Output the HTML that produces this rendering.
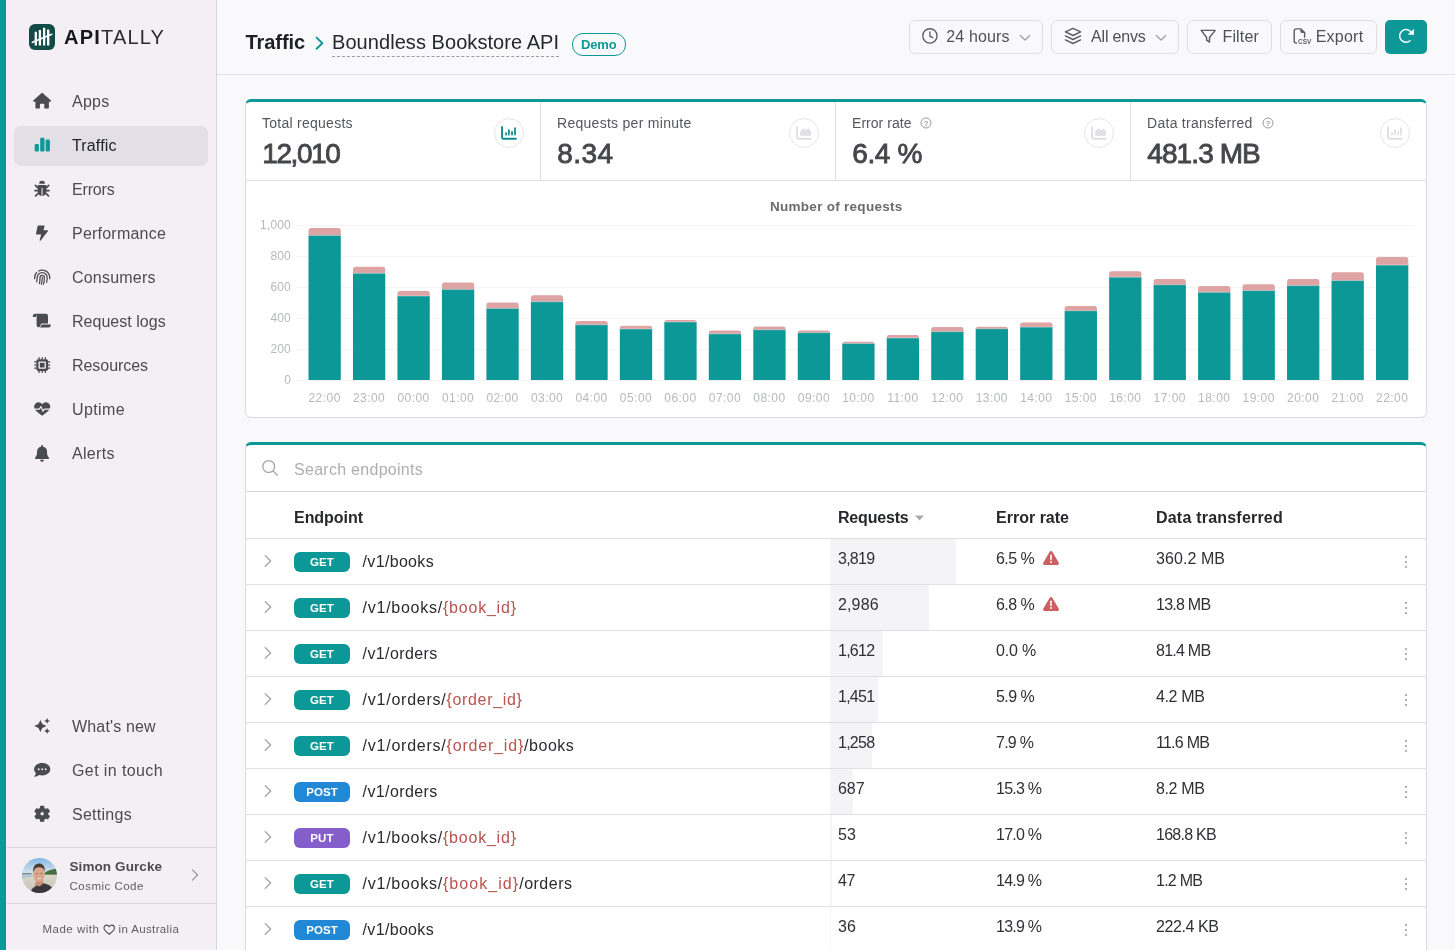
<!DOCTYPE html>
<html lang="en">
<head>
<meta charset="utf-8">
<title>Traffic - Boundless Bookstore API - Apitally</title>
<style>
*{box-sizing:border-box;margin:0;padding:0}
html,body{width:1455px;height:950px;overflow:hidden}
body{font-family:"Liberation Sans",sans-serif;background:#f9f9fb;color:#26272b;position:relative;will-change:transform}
.abs{position:absolute}
.t{position:absolute;white-space:nowrap}
#stripe{position:absolute;left:0;top:0;width:6px;height:950px;background:#0d9898}
#side{position:absolute;left:6px;top:0;width:211px;height:950px;background:#f3eff5;border-right:1px solid #d6d5da}
#logo{position:absolute;left:23px;top:24px;width:26px;height:26px;border-radius:6px;background:#124b48}
#brand{position:absolute;left:58px;top:25px;font-size:20px;line-height:24px;letter-spacing:1.2px;color:#16181b;white-space:nowrap}
#brand b{font-weight:700}
#brand span{font-weight:400;color:#2a2c30}
.nav{position:absolute;left:8px;width:194px;height:40px;border-radius:7px;color:#4b4c52;font-size:16px;line-height:40px;white-space:nowrap}
.nav.on{background:#e2e0e6;color:#222327}
.nav svg{position:absolute;left:16px;top:7px;width:24px;height:24px;fill:#4a4b50}
.nav.on svg{fill:#0d9898}
.nav span{position:absolute;left:58px;top:0}
#user{position:absolute;left:0;top:847px;width:210px;height:57px;border-top:1px solid #dcdade;border-bottom:1px solid #dcdade}
#made{position:absolute;left:0;top:920px;width:210px;text-align:center;font-size:11.5px;color:#5d5e64;line-height:16px;white-space:nowrap}

#head{position:absolute;left:217px;top:0;width:1238px;height:75px;border-bottom:1px solid #e1e1e6;background:#f9f9fb}
.btn{position:absolute;top:20px;height:34px;border:1px solid #dfdfe4;border-radius:6px;background:#f9f9fb;color:#4b4c52;font-size:15.5px;line-height:32px;white-space:nowrap}
.btn span{position:absolute;top:0}
.btn svg{position:absolute}

.card{position:absolute;left:245px;width:1182px;background:#fff;border:1px solid #d9dbde;border-top:3px solid #0d9898;border-radius:6px}
.stat{position:absolute;top:0;height:78px;border-right:1px solid #dfe0e3}
.stat .l{position:absolute;left:16px;top:13px;font-size:13.5px;line-height:16px;color:#55565c;white-space:nowrap}

.stat .ic{position:absolute;right:16.5px;top:16px;width:30px;height:30px;border:1px solid #e4e5e8;border-radius:50%;background:#fff}
.stat .ic svg{position:absolute;left:6px;top:6px;width:16px;height:16px}

.row{position:absolute;left:0;width:1180px;height:46px;border-top:1px solid #dfe0e3}
.row .chev{position:absolute;left:16px;top:15px;width:12px;height:14px}
.badge{position:absolute;left:48px;top:13px;width:56px;height:20px;border-radius:6px;color:#fff;font-size:11.5px;font-weight:700;line-height:20px;text-align:center;letter-spacing:.1px}
.get{background:#0d9898}.post{background:#2088d4}.put{background:#845eca}
.path{position:absolute;left:116.6px;top:12px;font-size:16px;line-height:22px;color:#2a2b2f;white-space:nowrap}
.path i{font-style:normal;color:#b8534f}
.path b{font-weight:400}
.rb{position:absolute;left:584px;top:0;height:45px;background:#f4f4f6}
.c1,.c2,.c3{position:absolute;top:9px;font-size:16px;line-height:22px;color:#2f3034;white-space:nowrap}
.c1{left:592px}.c2{left:750px}.c3{left:910px}
.dots{position:absolute;left:1158.5px;top:16.5px;width:4px;height:14px}
.dots i{display:block;width:2.8px;height:2.8px;border-radius:50%;background:#929398;margin:0 0 2.3px 0}
.warn{position:absolute;left:797.1px;top:12px;width:16px;height:14px}
</style>
</head>
<body>
<div id="stripe"></div>
<div id="side">
  <div id="logo"><svg width="26" height="26" viewBox="0 0 26 26"><g stroke="#fff" fill="none"><path d="M6.8 7.8V21.6M10.9 6V21.6M15.1 3.8V21.6M19.2 5.4V21.6" stroke-width="2.3"/><path d="M3.4 18.3L22.8 10.3" stroke-width="1.7" stroke-linecap="round"/></g></svg></div>
  <div id="brand"><b>API</b><span>TALLY</span></div>
  <div class="nav" style="top:82px"><svg viewBox="0 0 24 24"><path d="M11.3 4.2 a1.2 1.2 0 0 1 1.6 0 L20.7 11.2 a.9.9 0 0 1 -.6 1.6 H18.9 V18.4 a1.2 1.2 0 0 1 -1.2 1.2 H14.3 V15.4 a.7.7 0 0 0 -.7-.7 h-3 a.7.7 0 0 0 -.7.7 V19.6 H6.6 a1.2 1.2 0 0 1 -1.2-1.2 V12.8 H4.1 a.9.9 0 0 1 -.6-1.6 Z"/></svg><span style="letter-spacing:0.26px">Apps</span></div>
  <div class="nav on" style="top:126px"><svg viewBox="0 0 24 24"><rect x="4.7" y="11" width="4.2" height="7.5" rx="1.3"/><rect x="10.2" y="4.7" width="4.3" height="13.8" rx="1.3"/><rect x="15.6" y="6.6" width="4.3" height="11.9" rx="1.3"/></svg><span style="letter-spacing:0.15px">Traffic</span></div>
  <div class="nav" style="top:170px"><svg viewBox="0 0 24 24"><path d="M9.2 6.7 a2.85 2.85 0 0 1 5.7 0 Z"/><path d="M7.7 8 h8.7 v6.6 a4.35 4.35 0 0 1 -8.7 0 Z"/><path d="M12.05 11 V18.9" stroke="#f3eff5" stroke-width="1" fill="none"/><g fill="none" stroke="#4a4b50" stroke-width="1.7" stroke-linecap="round"><path d="M7.7 10.6 L5.4 8.3 M7.6 13.6 H5 M8.2 16.4 L5.6 18.9 M16.4 10.6 L18.7 8.3 M16.5 13.6 H19.1 M15.9 16.4 L18.5 18.9"/></g></svg><span style="letter-spacing:-0.16px">Errors</span></div>
  <div class="nav" style="top:214px"><svg viewBox="0 0 24 24"><path d="M8.3 4.4 H13.9 a.7.7 0 0 1 .67.9 L13.5 9.2 H17.4 a.7.7 0 0 1 .52 1.15 L10.7 19.6 a.6.6 0 0 1-1.05-.5 L11.2 13.4 H6.7 a.7.7 0 0 1-.67-.9 L7.65 4.9 a.7.7 0 0 1 .67-.5 Z"/></svg><span style="letter-spacing:0.22px">Performance</span></div>
  <div class="nav" style="top:258px"><svg viewBox="0 0 24 24"><g fill="none" stroke="#4a4b50" stroke-width="1.25" stroke-linecap="round"><path d="M4.7 13.6 a7.5 7.5 0 0 1 2-6.2"/><path d="M8.6 6 a7.5 7.5 0 0 1 11.1 6.5 v1.2"/><path d="M6.6 16.8 c.5-1.4.6-2.8.6-4.3 a5 5 0 0 1 10 0 c0 1.8-.15 3.4-.55 4.9"/><path d="M9.4 18.6 c.5-1.9.6-4 .6-6.1 a2.2 2.2 0 0 1 4.4 0 c0 2.4-.25 4.6-.85 6.6"/><path d="M12.2 12.4 c0 2.5-.2 4.7-.8 7"/></g></svg><span style="letter-spacing:0.21px">Consumers</span></div>
  <div class="nav" style="top:302px"><svg viewBox="0 0 24 24"><path d="M5.3 4.7 a2.5 2.5 0 0 0 -2.5 2.5 v.8 h3 v-.8 a.9.9 0 0 0 -.5 -2.5 Z"/><path d="M6.9 4.7 H15.7 a2.3 2.3 0 0 1 2.3 2.3 V14.5 H11.7 L10.5 15.7 V16.2 a1.95 1.95 0 0 1 -3.9 0 V7 a2.4 2.4 0 0 0 -.7 -2.3 Z"/><path d="M12 15.5 H20.8 v.7 a2.3 2.3 0 0 1 -2.3 2.3 H9.3 a2.7 2.7 0 0 0 2 -2.3 Z"/></svg><span style="letter-spacing:0.03px">Request logs</span></div>
  <div class="nav" style="top:346px"><svg viewBox="0 0 24 24"><rect x="6.3" y="6.2" width="11.8" height="11.7" rx="1.8"/><rect x="8.5" y="8.4" width="7.4" height="7.3" rx=".9" fill="#f3eff5"/><rect x="9.8" y="9.7" width="4.8" height="4.7" rx=".3"/><g><rect x="8.4" y="4.1" width="1.3" height="2.6" rx=".6"/><rect x="11.55" y="4.1" width="1.3" height="2.6" rx=".6"/><rect x="14.7" y="4.1" width="1.3" height="2.6" rx=".6"/><rect x="8.4" y="17.4" width="1.3" height="2.6" rx=".6"/><rect x="11.55" y="17.4" width="1.3" height="2.6" rx=".6"/><rect x="14.7" y="17.4" width="1.3" height="2.6" rx=".6"/><rect x="4.1" y="8.3" width="2.6" height="1.3" rx=".6"/><rect x="4.1" y="11.4" width="2.6" height="1.3" rx=".6"/><rect x="4.1" y="14.5" width="2.6" height="1.3" rx=".6"/><rect x="17.7" y="8.3" width="2.6" height="1.3" rx=".6"/><rect x="17.7" y="11.4" width="2.6" height="1.3" rx=".6"/><rect x="17.7" y="14.5" width="2.6" height="1.3" rx=".6"/></g></svg><span style="letter-spacing:-0.05px">Resources</span></div>
  <div class="nav" style="top:390px"><svg viewBox="0 0 24 24"><path d="M12.2 7.3 C11 5.3 8.4 4.7 6.4 5.8 C4.3 7 3.5 9.6 4.6 11.8 C5.6 13.8 9 16.7 12.2 18.8 C15.4 16.7 18.8 13.8 19.8 11.8 C20.9 9.6 20.1 7 18 5.8 C16 4.7 13.4 5.3 12.2 7.3 Z"/><path d="M3.6 12.1 H9.4 L10.9 9.5 L13 14.3 L14.4 12.1 H20.8" fill="none" stroke="#f3eff5" stroke-width="1.15" stroke-linejoin="round"/></svg><span style="letter-spacing:0.39px">Uptime</span></div>
  <div class="nav" style="top:434px"><svg viewBox="0 0 24 24"><path d="M12.05 4.1 a1 1 0 0 1 1 1 v.55 a5 5 0 0 1 4 4.9 v1.1 c0 1.9.6 3.5 1.7 4.7 l.2.25 a.8.8 0 0 1 -.6 1.3 H5.75 a.8.8 0 0 1 -.6-1.3 l.2-.25 C6.45 15.15 7.05 13.55 7.05 11.65 V10.55 a5 5 0 0 1 4-4.9 V5.1 a1 1 0 0 1 1-1 Z"/><path d="M10.05 18.7 h4 a2 2 0 0 1 -4 0 Z"/></svg><span style="letter-spacing:0.30px">Alerts</span></div>
  <div class="nav" style="top:707px"><svg viewBox="0 0 24 24"><path d="M10.40 5.90 L12.29 10.11 L16.50 12.00 L12.29 13.89 L10.40 18.10 L8.51 13.89 L4.30 12.00 L8.51 10.11Z"/><path d="M17.10 3.90 L18.00 6.00 L20.10 6.90 L18.00 7.80 L17.10 9.90 L16.20 7.80 L14.10 6.90 L16.20 6.00Z"/><path d="M17.10 14.00 L18.00 16.10 L20.10 17.00 L18.00 17.90 L17.10 20.00 L16.20 17.90 L14.10 17.00 L16.20 16.10Z"/></svg><span style="letter-spacing:0.16px">What's new</span></div>
  <div class="nav" style="top:751px"><svg viewBox="0 0 24 24"><path d="M12.2 5.1 c4.5 0 8.1 2.75 8.1 6.15 s-3.6 6.15 -8.1 6.15 c-1.1 0-2.2-.17-3.2-.48 c-1.2.9-2.7 1.7-4.4 1.8 a.35.35 0 0 1 -.3-.58 c.8-.95 1.4-2 1.65-3 C4.8 14.1 4.1 12.75 4.1 11.25 C4.1 7.85 7.7 5.1 12.2 5.1 Z"/><g fill="#f3eff5"><circle cx="8.7" cy="11.3" r=".95"/><circle cx="12.2" cy="11.3" r=".95"/><circle cx="15.7" cy="11.3" r=".95"/></g></svg><span style="letter-spacing:0.40px">Get in touch</span></div>
  <div class="nav" style="top:795px"><svg viewBox="0 0 24 24"><path fill-rule="evenodd" stroke="#4a4b50" stroke-width="1.2" stroke-linejoin="round" d="M10.39 6.48 L10.66 4.45 L13.64 4.45 L13.91 6.48 L15.87 7.62 L17.77 6.83 L19.26 9.42 L17.63 10.67 L17.63 12.93 L19.26 14.18 L17.77 16.77 L15.87 15.98 L13.91 17.12 L13.64 19.15 L10.66 19.15 L10.39 17.12 L8.43 15.98 L6.53 16.77 L5.04 14.18 L6.67 12.93 L6.67 10.67 L5.04 9.42 L6.53 6.83 L8.43 7.62Z M9.85 11.80 a2.30 2.30 0 1 0 4.60 0 a2.30 2.30 0 1 0 -4.60 0Z"/></svg><span style="letter-spacing:0.27px">Settings</span></div>
  <div id="user">
    <svg class="abs" style="left:16px;top:10px" width="35" height="35" viewBox="0 0 35 35"><defs><clipPath id="av"><circle cx="17.5" cy="17.5" r="17.5"/></clipPath><linearGradient id="sky" x1="0" y1="0" x2="0" y2="1"><stop offset="0" stop-color="#86b9e8"/><stop offset=".6" stop-color="#b9d3ea"/><stop offset="1" stop-color="#dbe5ec"/></linearGradient><linearGradient id="sand" x1="0" y1="0" x2="0" y2="1"><stop offset="0" stop-color="#dcd9cd"/><stop offset="1" stop-color="#c4c0b1"/></linearGradient></defs><g clip-path="url(#av)"><rect width="35" height="16.4" fill="url(#sky)"/><rect y="16.2" width="35" height="18.8" fill="url(#sand)"/><path d="M0 15.4 H10.5 V18.4 Q5 19.4 0 21 Z" fill="#b7c7d1"/><path d="M0 15 H9.5 V16.2 H0 Z" fill="#71898f"/><path d="M22 16.5 C23 13.6 27 12.6 30 11.6 C32 11 34 10.6 35 10.4 V16.7 Z" fill="#456d3e"/><path d="M14 21 H20.6 L21.4 27 L13 28.4 Z" fill="#c58f78"/><path d="M8 35 C9 31 12 28.6 15 27.4 Q18.2 29.6 21.4 25.2 C25 25.8 29 27.6 31 31 V35 Z" fill="#39393c"/><ellipse cx="16.9" cy="15.9" rx="5.7" ry="8.3" fill="#d9a68c"/><path d="M11.2 14.6 C10.5 8.6 13.5 5.4 17 5.4 C20.6 5.4 23.3 8 22.7 13.9 C22 10.9 20.6 9.3 17.2 9.3 C13.8 9.3 12 11 11.2 14.6 Z" fill="#4a3b33"/><circle cx="14.9" cy="15.6" r=".7" fill="#5e4439" opacity=".75"/><circle cx="19.3" cy="15.4" r=".7" fill="#5e4439" opacity=".75"/><path d="M15 19.8 Q17.4 22.6 19.8 19.6 Q17.4 20.8 15 19.8 Z" fill="#f6efea"/></g></svg>
    <div class="t" style="left:63.5px;top:9.7px;font-size:13.5px;line-height:17px;letter-spacing:0.09px;font-weight:700;color:#4b4c52;">Simon Gurcke</div>
    <div class="t" style="left:63.5px;top:31px;font-size:11.5px;line-height:14px;letter-spacing:0.48px;color:#5d5e64;">Cosmic Code</div>
    <svg class="abs" style="left:184.2px;top:20.4px" width="10" height="14" viewBox="0 0 10 14"><path d="M2.4 1.8 L7.6 7 L2.4 12.2" fill="none" stroke="#97989e" stroke-width="1.2" stroke-linecap="round" stroke-linejoin="round"/></svg>
  </div>
  <div class="t" style="left:36.4px;top:921.8px;font-size:11.5px;line-height:14px;letter-spacing:0.52px;color:#5d5e64;">Made with</div><svg class="abs" style="left:96.5px;top:923.6px" width="12.4" height="11.4" viewBox="0 0 13 12"><path d="M6.5 10.8 C3.5 8.6 1 6.6 1 4.2 C1 2.4 2.3 1.2 3.8 1.2 C4.9 1.2 5.9 1.8 6.5 2.9 C7.1 1.8 8.1 1.2 9.2 1.2 C10.7 1.2 12 2.4 12 4.2 C12 6.6 9.5 8.6 6.5 10.8 Z" fill="none" stroke="#4b4c52" stroke-width="1.1" stroke-linejoin="round"/></svg><div class="t" style="left:112.6px;top:921.8px;font-size:11.5px;line-height:14px;letter-spacing:0.36px;color:#5d5e64;">in Australia</div>
</div>
<div id="head">
  <div class="t" style="left:28.5px;top:29.5px;font-size:20px;line-height:25px;letter-spacing:-0.07px;font-weight:700;color:#1f2024;">Traffic</div>
  <svg class="abs" style="left:97px;top:36px" width="12" height="14" viewBox="0 0 12 14"><path d="M2.6 1.6 L8.3 7.2 L2.6 12.8" fill="none" stroke="#0d9898" stroke-width="1.9" stroke-linecap="round" stroke-linejoin="round"/></svg>
  <div class="t" style="left:115px;top:29.5px;font-size:20px;line-height:25px;letter-spacing:0.06px;color:#26272b;">Boundless Bookstore API</div>
  <div class="abs" style="left:115px;top:56px;width:227px;height:0;border-top:1px dashed #9b9ca2"></div>
  <div class="abs" style="left:355px;top:33px;width:54px;height:23px;border:1.4px solid #0d9898;border-radius:11px"></div>
  <div class="t" style="left:364px;top:36.9px;font-size:13px;line-height:16px;letter-spacing:-0.15px;font-weight:700;color:#0d9898;">Demo</div>
  <div class="btn" style="left:692px;width:134px"><svg style="left:12px;top:7px" width="18" height="18" viewBox="0 0 18 18"><g fill="none" stroke="#5b5c62" stroke-width="1.35" stroke-linecap="round" stroke-linejoin="round"><circle cx="7.9" cy="7.9" r="7.15"/><path d="M7.9 3.8 V8.1 L10.7 9.7"/></g></svg><div class="t" style="left:36.2px;top:5.5px;font-size:16px;line-height:20px;letter-spacing:0.15px;color:#4f5056;">24 hours</div><svg style="left:109px;top:13px" width="12" height="8" viewBox="0 0 12 8"><path d="M1.3 1.5 L6 6 L10.7 1.5" fill="none" stroke="#9c9da3" stroke-width="1.2" stroke-linecap="round" stroke-linejoin="round"/></svg></div>
  <div class="btn" style="left:834px;width:128px"><svg style="left:12px;top:6px" width="20" height="20" viewBox="0 0 20 20"><g fill="none" stroke="#5b5c62" stroke-width="1.4" stroke-linejoin="round" stroke-linecap="round"><path d="M9 1.3 L16.6 4.9 L9 8.5 L1.4 4.9 Z"/><path d="M1.4 8.9 L9 12.5 L16.6 8.9"/><path d="M1.4 12.9 L9 16.5 L16.6 12.9"/></g></svg><div class="t" style="left:39.1px;top:5.5px;font-size:16px;line-height:20px;letter-spacing:-0.18px;color:#4f5056;">All envs</div><svg style="left:103px;top:13px" width="12" height="8" viewBox="0 0 12 8"><path d="M1.3 1.5 L6 6 L10.7 1.5" fill="none" stroke="#9c9da3" stroke-width="1.2" stroke-linecap="round" stroke-linejoin="round"/></svg></div>
  <div class="btn" style="left:970px;width:85px"><svg style="left:11px;top:7px" width="20" height="18" viewBox="0 0 20 18"><path d="M2.2 2.4 H16.2 L10.5 9.5 V14.2 L7.6 12.2 V9.5 Z" fill="none" stroke="#5b5c62" stroke-width="1.4" stroke-linejoin="round"/></svg><div class="t" style="left:34.5px;top:5.5px;font-size:16px;line-height:20px;letter-spacing:0.14px;color:#4f5056;">Filter</div></div>
  <div class="btn" style="left:1063px;width:97px"><svg style="left:11px;top:6px" width="20" height="20" viewBox="0 0 20 20"><g fill="none" stroke="#5b5c62" stroke-width="1.4" stroke-linejoin="round" stroke-linecap="round"><path d="M4.4 16 H4.2 a2 2 0 0 1 -2 -2 V3.9 a2 2 0 0 1 2 -2 H8.9 L12.6 5.6 V10.2"/></g><path d="M8.4 2 V4.6 a1.3 1.3 0 0 0 1.3 1.3 H12.7 Z" fill="#5b5c62"/><text x="5.9" y="16.8" font-family="Liberation Sans,sans-serif" font-size="6.4" font-weight="700" fill="#5b5c62" letter-spacing=".15">CSV</text></svg><div class="t" style="left:34.7px;top:5.5px;font-size:16px;line-height:20px;letter-spacing:0.24px;color:#4f5056;">Export</div></div>
  <div class="abs" style="left:1168px;top:20px;width:42px;height:34px;border-radius:5px;background:#0d9898"><svg class="abs" style="left:12px;top:7px" width="20" height="20" viewBox="0 0 20 20"><path d="M13.6 4.6 A6.3 6.3 0 1 0 13.05 13.7" fill="none" stroke="#fff" stroke-width="1.5" stroke-linecap="round"/><path d="M11.3 7.2 L16.6 2.5 V7.6 Z" fill="#fff" stroke="#fff" stroke-width=".6" stroke-linejoin="round"/></svg></div>
</div>
<div class="card" style="top:99px;height:319px">
<div class="stat" style="left:0px;width:295px"><div class="t" style="left:16px;top:12.3px;font-size:14px;line-height:18px;letter-spacing:0.26px;color:#55565c;">Total requests</div><div class="t" style="left:16.3px;top:33.7px;font-size:28px;line-height:35px;letter-spacing:-1.42px;color:#45464b;-webkit-text-stroke:.85px #45464b;">12,010</div><div class="ic"><svg viewBox="0 0 16 16"><path d="M1.05 1.9 V11.9 a1.85 1.85 0 0 0 1.85 1.85 H14.9" fill="none" stroke="#0f8f8f" stroke-width="1.9" stroke-linecap="round"/><path d="M5.05 8.1 V9.6 M7.85 5.1 V9.6 M11.05 7 V9.6 M14.05 3.2 V9.6" fill="none" stroke="#0f8f8f" stroke-width="1.8" stroke-linecap="round"/></svg></div></div>
<div class="stat" style="left:295px;width:295px"><div class="t" style="left:16px;top:12.3px;font-size:14px;line-height:18px;letter-spacing:0.28px;color:#55565c;">Requests per minute</div><div class="t" style="left:16.3px;top:33.7px;font-size:28px;line-height:35px;letter-spacing:0.4px;color:#45464b;-webkit-text-stroke:.85px #45464b;">8.34</div><div class="ic"><svg viewBox="0 0 16 16"><path d="M1.05 1.9 V11.9 a1.85 1.85 0 0 0 1.85 1.85 H14.9" fill="none" stroke="#dfe0e3" stroke-width="1.9" stroke-linecap="round"/><path d="M4.5 10.2 V7 L7.4 3.6 L9.9 6 L12.4 3.9 L14.5 6.4 V10.2 Z" fill="#dfe0e3" stroke="#dfe0e3" stroke-width="1" stroke-linejoin="round"/></svg></div></div>
<div class="stat" style="left:590px;width:295px"><div class="t" style="left:16px;top:12.3px;font-size:14px;line-height:18px;letter-spacing:0.04px;color:#55565c;">Error rate</div><div class="t" style="left:16.3px;top:33.7px;font-size:28px;line-height:35px;letter-spacing:-0.4px;color:#45464b;-webkit-text-stroke:.85px #45464b;">6.4 %</div><div class="ic"><svg viewBox="0 0 16 16"><path d="M1.05 1.9 V11.9 a1.85 1.85 0 0 0 1.85 1.85 H14.9" fill="none" stroke="#dfe0e3" stroke-width="1.9" stroke-linecap="round"/><path d="M4.5 10.2 V7 L7.4 3.6 L9.9 6 L12.4 3.9 L14.5 6.4 V10.2 Z" fill="#dfe0e3" stroke="#dfe0e3" stroke-width="1" stroke-linejoin="round"/></svg></div><svg class="abs" style="left:84.4px;top:15px" width="12" height="12" viewBox="0 0 12 12"><circle cx="6" cy="6" r="5" fill="none" stroke="#9a9ba1" stroke-width="1"/><text x="6" y="8.6" text-anchor="middle" font-family="Liberation Sans,sans-serif" font-size="7.5" font-weight="700" fill="#9a9ba1">?</text></svg></div>
<div class="stat" style="left:885px;width:295px;border-right:0"><div class="t" style="left:16px;top:12.3px;font-size:14px;line-height:18px;letter-spacing:0.28px;color:#55565c;">Data transferred</div><div class="t" style="left:16.3px;top:33.7px;font-size:28px;line-height:35px;letter-spacing:-0.91px;color:#45464b;-webkit-text-stroke:.85px #45464b;">481.3 MB</div><div class="ic"><svg viewBox="0 0 16 16"><path d="M1.05 1.9 V11.9 a1.85 1.85 0 0 0 1.85 1.85 H14.9" fill="none" stroke="#dfe0e3" stroke-width="1.9" stroke-linecap="round"/><path d="M5.05 8.1 V9.6 M7.85 5.1 V9.6 M11.05 7 V9.6 M14.05 3.2 V9.6" fill="none" stroke="#dfe0e3" stroke-width="1.8" stroke-linecap="round"/></svg></div><svg class="abs" style="left:130.5px;top:15px" width="12" height="12" viewBox="0 0 12 12"><circle cx="6" cy="6" r="5" fill="none" stroke="#9a9ba1" stroke-width="1"/><text x="6" y="8.6" text-anchor="middle" font-family="Liberation Sans,sans-serif" font-size="7.5" font-weight="700" fill="#9a9ba1">?</text></svg></div>
<div class="abs" style="left:0;top:78px;width:1180px;height:1px;background:#dfe0e3"></div>
<svg class="abs" style="left:0;top:0" width="1180" height="314" viewBox="246 102 1180 314"><path d="M296 380.5 H1414" stroke="#f4f4f6" stroke-width="1"/><path d="M296 349.5 H1414" stroke="#f4f4f6" stroke-width="1"/><path d="M296 318.5 H1414" stroke="#f4f4f6" stroke-width="1"/><path d="M296 287.5 H1414" stroke="#f4f4f6" stroke-width="1"/><path d="M296 256.5 H1414" stroke="#f4f4f6" stroke-width="1"/><path d="M296 225.5 H1414" stroke="#f4f4f6" stroke-width="1"/><path d="M308.49 235.9 V230.4 a2.5 2.5 0 0 1 2.5 -2.5 H338.29 a2.5 2.5 0 0 1 2.5 2.5 V235.9 Z" fill="#dea3a3"/><rect x="308.49" y="235.4" width="32.3" height="144.6" fill="#0d9898"/><rect x="308.49" y="234.95" width="32.3" height=".9" fill="#fff" opacity=".4"/><path d="M352.97 273.8 V269.2 a2.5 2.5 0 0 1 2.5 -2.5 H382.77 a2.5 2.5 0 0 1 2.5 2.5 V273.8 Z" fill="#dea3a3"/><rect x="352.97" y="273.3" width="32.3" height="106.7" fill="#0d9898"/><rect x="352.97" y="272.85" width="32.3" height=".9" fill="#fff" opacity=".4"/><path d="M397.45 296.5 V293.5 a2.5 2.5 0 0 1 2.5 -2.5 H427.25 a2.5 2.5 0 0 1 2.5 2.5 V296.5 Z" fill="#dea3a3"/><rect x="397.45" y="296" width="32.3" height="84" fill="#0d9898"/><rect x="397.45" y="295.55" width="32.3" height=".9" fill="#fff" opacity=".4"/><path d="M441.93 289.9 V284.9 a2.5 2.5 0 0 1 2.5 -2.5 H471.73 a2.5 2.5 0 0 1 2.5 2.5 V289.9 Z" fill="#dea3a3"/><rect x="441.93" y="289.4" width="32.3" height="90.6" fill="#0d9898"/><rect x="441.93" y="288.95" width="32.3" height=".9" fill="#fff" opacity=".4"/><path d="M486.41 308.9 V305.1 a2.5 2.5 0 0 1 2.5 -2.5 H516.21 a2.5 2.5 0 0 1 2.5 2.5 V308.9 Z" fill="#dea3a3"/><rect x="486.41" y="308.4" width="32.3" height="71.6" fill="#0d9898"/><rect x="486.41" y="307.95" width="32.3" height=".9" fill="#fff" opacity=".4"/><path d="M530.89 302.3 V297.7 a2.5 2.5 0 0 1 2.5 -2.5 H560.69 a2.5 2.5 0 0 1 2.5 2.5 V302.3 Z" fill="#dea3a3"/><rect x="530.89" y="301.8" width="32.3" height="78.2" fill="#0d9898"/><rect x="530.89" y="301.35" width="32.3" height=".9" fill="#fff" opacity=".4"/><path d="M575.37 325.3 V323.6 a2.5 2.5 0 0 1 2.5 -2.5 H605.17 a2.5 2.5 0 0 1 2.5 2.5 V325.3 Z" fill="#dea3a3"/><rect x="575.37" y="324.8" width="32.3" height="55.2" fill="#0d9898"/><rect x="575.37" y="324.35" width="32.3" height=".9" fill="#fff" opacity=".4"/><path d="M619.85 329.5 V328.2 a2.5 2.5 0 0 1 2.5 -2.5 H649.65 a2.5 2.5 0 0 1 2.5 2.5 V329.5 Z" fill="#dea3a3"/><rect x="619.85" y="329" width="32.3" height="51" fill="#0d9898"/><rect x="619.85" y="328.55" width="32.3" height=".9" fill="#fff" opacity=".4"/><path d="M664.33 322.5 V322.4 a2.5 2.5 0 0 1 2.5 -2.5 H694.13 a2.5 2.5 0 0 1 2.5 2.5 V322.5 Z" fill="#dea3a3"/><rect x="664.33" y="322" width="32.3" height="58" fill="#0d9898"/><rect x="664.33" y="321.55" width="32.3" height=".9" fill="#fff" opacity=".4"/><path d="M708.81 334.4 V333.1 a2.5 2.5 0 0 1 2.5 -2.5 H738.61 a2.5 2.5 0 0 1 2.5 2.5 V334.4 Z" fill="#dea3a3"/><rect x="708.81" y="333.9" width="32.3" height="46.1" fill="#0d9898"/><rect x="708.81" y="333.45" width="32.3" height=".9" fill="#fff" opacity=".4"/><path d="M753.29 330.3 V329 a2.5 2.5 0 0 1 2.5 -2.5 H783.09 a2.5 2.5 0 0 1 2.5 2.5 V330.3 Z" fill="#dea3a3"/><rect x="753.29" y="329.8" width="32.3" height="50.2" fill="#0d9898"/><rect x="753.29" y="329.35" width="32.3" height=".9" fill="#fff" opacity=".4"/><path d="M797.77 333.2 V333.1 a2.5 2.5 0 0 1 2.5 -2.5 H827.57 a2.5 2.5 0 0 1 2.5 2.5 V333.2 Z" fill="#dea3a3"/><rect x="797.77" y="332.7" width="32.3" height="47.3" fill="#0d9898"/><rect x="797.77" y="332.25" width="32.3" height=".9" fill="#fff" opacity=".4"/><path d="M842.25 344 V344.3 a2.5 2.5 0 0 1 2.5 -2.5 H872.05 a2.5 2.5 0 0 1 2.5 2.5 V344 Z" fill="#dea3a3"/><rect x="842.25" y="343.5" width="32.3" height="36.5" fill="#0d9898"/><rect x="842.25" y="343.05" width="32.3" height=".9" fill="#fff" opacity=".4"/><path d="M886.73 338.5 V337.6 a2.5 2.5 0 0 1 2.5 -2.5 H916.53 a2.5 2.5 0 0 1 2.5 2.5 V338.5 Z" fill="#dea3a3"/><rect x="886.73" y="338" width="32.3" height="42" fill="#0d9898"/><rect x="886.73" y="337.55" width="32.3" height=".9" fill="#fff" opacity=".4"/><path d="M931.21 332.2 V329.6 a2.5 2.5 0 0 1 2.5 -2.5 H961.01 a2.5 2.5 0 0 1 2.5 2.5 V332.2 Z" fill="#dea3a3"/><rect x="931.21" y="331.7" width="32.3" height="48.3" fill="#0d9898"/><rect x="931.21" y="331.25" width="32.3" height=".9" fill="#fff" opacity=".4"/><path d="M975.69 329.3 V329.2 a2.5 2.5 0 0 1 2.5 -2.5 H1005.49 a2.5 2.5 0 0 1 2.5 2.5 V329.3 Z" fill="#dea3a3"/><rect x="975.69" y="328.8" width="32.3" height="51.2" fill="#0d9898"/><rect x="975.69" y="328.35" width="32.3" height=".9" fill="#fff" opacity=".4"/><path d="M1020.17 327.6 V325 a2.5 2.5 0 0 1 2.5 -2.5 H1049.97 a2.5 2.5 0 0 1 2.5 2.5 V327.6 Z" fill="#dea3a3"/><rect x="1020.17" y="327.1" width="32.3" height="52.9" fill="#0d9898"/><rect x="1020.17" y="326.65" width="32.3" height=".9" fill="#fff" opacity=".4"/><path d="M1064.65 311.3 V308.6 a2.5 2.5 0 0 1 2.5 -2.5 H1094.45 a2.5 2.5 0 0 1 2.5 2.5 V311.3 Z" fill="#dea3a3"/><rect x="1064.65" y="310.8" width="32.3" height="69.2" fill="#0d9898"/><rect x="1064.65" y="310.35" width="32.3" height=".9" fill="#fff" opacity=".4"/><path d="M1109.13 277.7 V273.8 a2.5 2.5 0 0 1 2.5 -2.5 H1138.93 a2.5 2.5 0 0 1 2.5 2.5 V277.7 Z" fill="#dea3a3"/><rect x="1109.13" y="277.2" width="32.3" height="102.8" fill="#0d9898"/><rect x="1109.13" y="276.75" width="32.3" height=".9" fill="#fff" opacity=".4"/><path d="M1153.61 285.3 V281.4 a2.5 2.5 0 0 1 2.5 -2.5 H1183.41 a2.5 2.5 0 0 1 2.5 2.5 V285.3 Z" fill="#dea3a3"/><rect x="1153.61" y="284.8" width="32.3" height="95.2" fill="#0d9898"/><rect x="1153.61" y="284.35" width="32.3" height=".9" fill="#fff" opacity=".4"/><path d="M1198.09 292.8 V288.5 a2.5 2.5 0 0 1 2.5 -2.5 H1227.89 a2.5 2.5 0 0 1 2.5 2.5 V292.8 Z" fill="#dea3a3"/><rect x="1198.09" y="292.3" width="32.3" height="87.7" fill="#0d9898"/><rect x="1198.09" y="291.85" width="32.3" height=".9" fill="#fff" opacity=".4"/><path d="M1242.57 291.1 V286.8 a2.5 2.5 0 0 1 2.5 -2.5 H1272.37 a2.5 2.5 0 0 1 2.5 2.5 V291.1 Z" fill="#dea3a3"/><rect x="1242.57" y="290.6" width="32.3" height="89.4" fill="#0d9898"/><rect x="1242.57" y="290.15" width="32.3" height=".9" fill="#fff" opacity=".4"/><path d="M1287.05 286.1 V281.4 a2.5 2.5 0 0 1 2.5 -2.5 H1316.85 a2.5 2.5 0 0 1 2.5 2.5 V286.1 Z" fill="#dea3a3"/><rect x="1287.05" y="285.6" width="32.3" height="94.4" fill="#0d9898"/><rect x="1287.05" y="285.15" width="32.3" height=".9" fill="#fff" opacity=".4"/><path d="M1331.53 281.1 V274.7 a2.5 2.5 0 0 1 2.5 -2.5 H1361.33 a2.5 2.5 0 0 1 2.5 2.5 V281.1 Z" fill="#dea3a3"/><rect x="1331.53" y="280.6" width="32.3" height="99.4" fill="#0d9898"/><rect x="1331.53" y="280.15" width="32.3" height=".9" fill="#fff" opacity=".4"/><path d="M1376.01 265.6 V259.6 a2.5 2.5 0 0 1 2.5 -2.5 H1405.81 a2.5 2.5 0 0 1 2.5 2.5 V265.6 Z" fill="#dea3a3"/><rect x="1376.01" y="265.1" width="32.3" height="114.9" fill="#0d9898"/><rect x="1376.01" y="264.65" width="32.3" height=".9" fill="#fff" opacity=".4"/><g font-family="Liberation Sans,sans-serif" font-size="12" letter-spacing=".45" fill="#b6b8bd" text-anchor="middle"><text x="324.64" y="402">22:00</text><text x="369.12" y="402">23:00</text><text x="413.6" y="402">00:00</text><text x="458.08" y="402">01:00</text><text x="502.56" y="402">02:00</text><text x="547.04" y="402">03:00</text><text x="591.52" y="402">04:00</text><text x="636" y="402">05:00</text><text x="680.48" y="402">06:00</text><text x="724.96" y="402">07:00</text><text x="769.44" y="402">08:00</text><text x="813.92" y="402">09:00</text><text x="858.4" y="402">10:00</text><text x="902.88" y="402">11:00</text><text x="947.36" y="402">12:00</text><text x="991.84" y="402">13:00</text><text x="1036.32" y="402">14:00</text><text x="1080.8" y="402">15:00</text><text x="1125.28" y="402">16:00</text><text x="1169.76" y="402">17:00</text><text x="1214.24" y="402">18:00</text><text x="1258.72" y="402">19:00</text><text x="1303.2" y="402">20:00</text><text x="1347.68" y="402">21:00</text><text x="1392.16" y="402">22:00</text></g><g font-family="Liberation Sans,sans-serif" font-size="12" letter-spacing=".2" fill="#b6b8bd" text-anchor="end"><text x="291" y="384.2">0</text><text x="291" y="353.2">200</text><text x="291" y="322.2">400</text><text x="291" y="291.2">600</text><text x="291" y="260.2">800</text><text x="291" y="229.2">1,000</text></g><text x="836.3" y="211" text-anchor="middle" font-family="Liberation Sans,sans-serif" font-size="13.5" font-weight="700" fill="#6a6b70" letter-spacing=".28">Number of requests</text></svg>
</div>
<div class="card" style="top:442px;height:540px;border-bottom-left-radius:0;border-bottom-right-radius:0">
<svg class="abs" style="left:15px;top:14px" width="18" height="18" viewBox="0 0 18 18"><g fill="none" stroke="#a6a7ac" stroke-width="1.3" stroke-linecap="round"><circle cx="7.7" cy="7.5" r="5.9"/><path d="M12.1 11.9 L16.4 16.2"/></g></svg>
<div class="t" style="left:48px;top:14.5px;font-size:16px;line-height:20px;letter-spacing:0.28px;color:#adaeb3;">Search endpoints</div>
<div class="abs" style="left:0;top:46px;width:1180px;height:1px;background:#d9dadd"></div>
<div class="t" style="left:48px;top:62.5px;font-size:16px;line-height:20px;letter-spacing:-0.04px;font-weight:700;color:#26272b;">Endpoint</div>
<div class="t" style="left:592px;top:62.5px;font-size:16px;line-height:20px;letter-spacing:-0.19px;font-weight:700;color:#26272b;">Requests</div>
<svg class="abs" style="left:668px;top:70px" width="11" height="6" viewBox="0 0 11 6"><path d="M1 .5 H10 L5.5 5.5 Z" fill="#a9aaaf"/></svg>
<div class="t" style="left:750px;top:62.5px;font-size:16px;line-height:20px;letter-spacing:0.01px;font-weight:700;color:#26272b;">Error rate</div>
<div class="t" style="left:910px;top:62.5px;font-size:16px;line-height:20px;letter-spacing:0.21px;font-weight:700;color:#26272b;">Data transferred</div>
<div class="row" style="top:93px"><div class="rb" style="width:126px"></div><svg class="chev" viewBox="0 0 12 14"><path d="M3.2 1.6 L8.6 7 L3.2 12.4" fill="none" stroke="#9c9da3" stroke-width="1.2" stroke-linecap="round" stroke-linejoin="round"/></svg><div class="badge get">GET</div><div class="path"><b style="letter-spacing:0.32px">/v1/books</b></div><div class="c1" style="letter-spacing:-0.75px">3,819</div><div class="c2" style="letter-spacing:-0.53px">6.5 %</div><div class="c3" style="letter-spacing:0.07px">360.2 MB</div><svg class="warn" viewBox="0 0 16 14"><path d="M8 .1 a1.5 1.5 0 0 1 1.3 .75 L15.75 11.65 a1.5 1.5 0 0 1 -1.3 2.25 H1.55 a1.5 1.5 0 0 1 -1.3 -2.25 L6.7 .85 A1.5 1.5 0 0 1 8 .1 Z" fill="#cb5f62"/><path d="M8 4.3 V8.5" stroke="#fff" stroke-width="1.6" stroke-linecap="round"/><circle cx="8" cy="11.1" r="1" fill="#fff"/></svg><div class="dots"><i></i><i></i><i></i></div></div>
<div class="row" style="top:139px"><div class="rb" style="width:98.52px"></div><svg class="chev" viewBox="0 0 12 14"><path d="M3.2 1.6 L8.6 7 L3.2 12.4" fill="none" stroke="#9c9da3" stroke-width="1.2" stroke-linecap="round" stroke-linejoin="round"/></svg><div class="badge get">GET</div><div class="path"><b style="letter-spacing:0.74px">/v1/books/</b><i style="letter-spacing:0.79px">{book_id}</i></div><div class="c1" style="letter-spacing:0.14px">2,986</div><div class="c2" style="letter-spacing:-0.53px">6.8 %</div><div class="c3" style="letter-spacing:-0.75px">13.8 MB</div><svg class="warn" viewBox="0 0 16 14"><path d="M8 .1 a1.5 1.5 0 0 1 1.3 .75 L15.75 11.65 a1.5 1.5 0 0 1 -1.3 2.25 H1.55 a1.5 1.5 0 0 1 -1.3 -2.25 L6.7 .85 A1.5 1.5 0 0 1 8 .1 Z" fill="#cb5f62"/><path d="M8 4.3 V8.5" stroke="#fff" stroke-width="1.6" stroke-linecap="round"/><circle cx="8" cy="11.1" r="1" fill="#fff"/></svg><div class="dots"><i></i><i></i><i></i></div></div>
<div class="row" style="top:185px"><div class="rb" style="width:53.18px"></div><svg class="chev" viewBox="0 0 12 14"><path d="M3.2 1.6 L8.6 7 L3.2 12.4" fill="none" stroke="#9c9da3" stroke-width="1.2" stroke-linecap="round" stroke-linejoin="round"/></svg><div class="badge get">GET</div><div class="path"><b style="letter-spacing:0.38px">/v1/orders</b></div><div class="c1" style="letter-spacing:-0.75px">1,612</div><div class="c2" style="letter-spacing:-0.18px">0.0 %</div><div class="c3" style="letter-spacing:-0.75px">81.4 MB</div><div class="dots"><i></i><i></i><i></i></div></div>
<div class="row" style="top:231px"><div class="rb" style="width:47.87px"></div><svg class="chev" viewBox="0 0 12 14"><path d="M3.2 1.6 L8.6 7 L3.2 12.4" fill="none" stroke="#9c9da3" stroke-width="1.2" stroke-linecap="round" stroke-linejoin="round"/></svg><div class="badge get">GET</div><div class="path"><b style="letter-spacing:0.76px">/v1/orders/</b><i style="letter-spacing:0.65px">{order_id}</i></div><div class="c1" style="letter-spacing:-0.75px">1,451</div><div class="c2" style="letter-spacing:-0.53px">5.9 %</div><div class="c3" style="letter-spacing:-0.36px">4.2 MB</div><div class="dots"><i></i><i></i><i></i></div></div>
<div class="row" style="top:277px"><div class="rb" style="width:41.51px"></div><svg class="chev" viewBox="0 0 12 14"><path d="M3.2 1.6 L8.6 7 L3.2 12.4" fill="none" stroke="#9c9da3" stroke-width="1.2" stroke-linecap="round" stroke-linejoin="round"/></svg><div class="badge get">GET</div><div class="path"><b style="letter-spacing:0.76px">/v1/orders/</b><i style="letter-spacing:0.81px">{order_id}</i><b style="letter-spacing:0.53px">/books</b></div><div class="c1" style="letter-spacing:-0.75px">1,258</div><div class="c2" style="letter-spacing:-0.75px">7.9 %</div><div class="c3" style="letter-spacing:-0.75px">11.6 MB</div><div class="dots"><i></i><i></i><i></i></div></div>
<div class="row" style="top:323px"><div class="rb" style="width:22.67px"></div><svg class="chev" viewBox="0 0 12 14"><path d="M3.2 1.6 L8.6 7 L3.2 12.4" fill="none" stroke="#9c9da3" stroke-width="1.2" stroke-linecap="round" stroke-linejoin="round"/></svg><div class="badge post">POST</div><div class="path"><b style="letter-spacing:0.38px">/v1/orders</b></div><div class="c1" style="letter-spacing:-0.05px">687</div><div class="c2" style="letter-spacing:-0.75px">15.3 %</div><div class="c3" style="letter-spacing:-0.36px">8.2 MB</div><div class="dots"><i></i><i></i><i></i></div></div>
<div class="row" style="top:369px"><div class="rb" style="width:1.75px"></div><svg class="chev" viewBox="0 0 12 14"><path d="M3.2 1.6 L8.6 7 L3.2 12.4" fill="none" stroke="#9c9da3" stroke-width="1.2" stroke-linecap="round" stroke-linejoin="round"/></svg><div class="badge put">PUT</div><div class="path"><b style="letter-spacing:0.74px">/v1/books/</b><i style="letter-spacing:0.79px">{book_id}</i></div><div class="c1" style="letter-spacing:0.1px">53</div><div class="c2" style="letter-spacing:-0.75px">17.0 %</div><div class="c3" style="letter-spacing:-0.75px">168.8 KB</div><div class="dots"><i></i><i></i><i></i></div></div>
<div class="row" style="top:415px"><div class="rb" style="width:1.55px"></div><svg class="chev" viewBox="0 0 12 14"><path d="M3.2 1.6 L8.6 7 L3.2 12.4" fill="none" stroke="#9c9da3" stroke-width="1.2" stroke-linecap="round" stroke-linejoin="round"/></svg><div class="badge get">GET</div><div class="path"><b style="letter-spacing:0.74px">/v1/books/</b><i style="letter-spacing:1.06px">{book_id}</i><b style="letter-spacing:0.49px">/orders</b></div><div class="c1" style="letter-spacing:-0.3px">47</div><div class="c2" style="letter-spacing:-0.75px">14.9 %</div><div class="c3" style="letter-spacing:-0.75px">1.2 MB</div><div class="dots"><i></i><i></i><i></i></div></div>
<div class="row" style="top:461px"><div class="rb" style="width:1.19px"></div><svg class="chev" viewBox="0 0 12 14"><path d="M3.2 1.6 L8.6 7 L3.2 12.4" fill="none" stroke="#9c9da3" stroke-width="1.2" stroke-linecap="round" stroke-linejoin="round"/></svg><div class="badge post">POST</div><div class="path"><b style="letter-spacing:0.32px">/v1/books</b></div><div class="c1" style="letter-spacing:0.1px">36</div><div class="c2" style="letter-spacing:-0.75px">13.9 %</div><div class="c3" style="letter-spacing:-0.42px">222.4 KB</div><div class="dots"><i></i><i></i><i></i></div></div>
</div>
</body>
</html>
